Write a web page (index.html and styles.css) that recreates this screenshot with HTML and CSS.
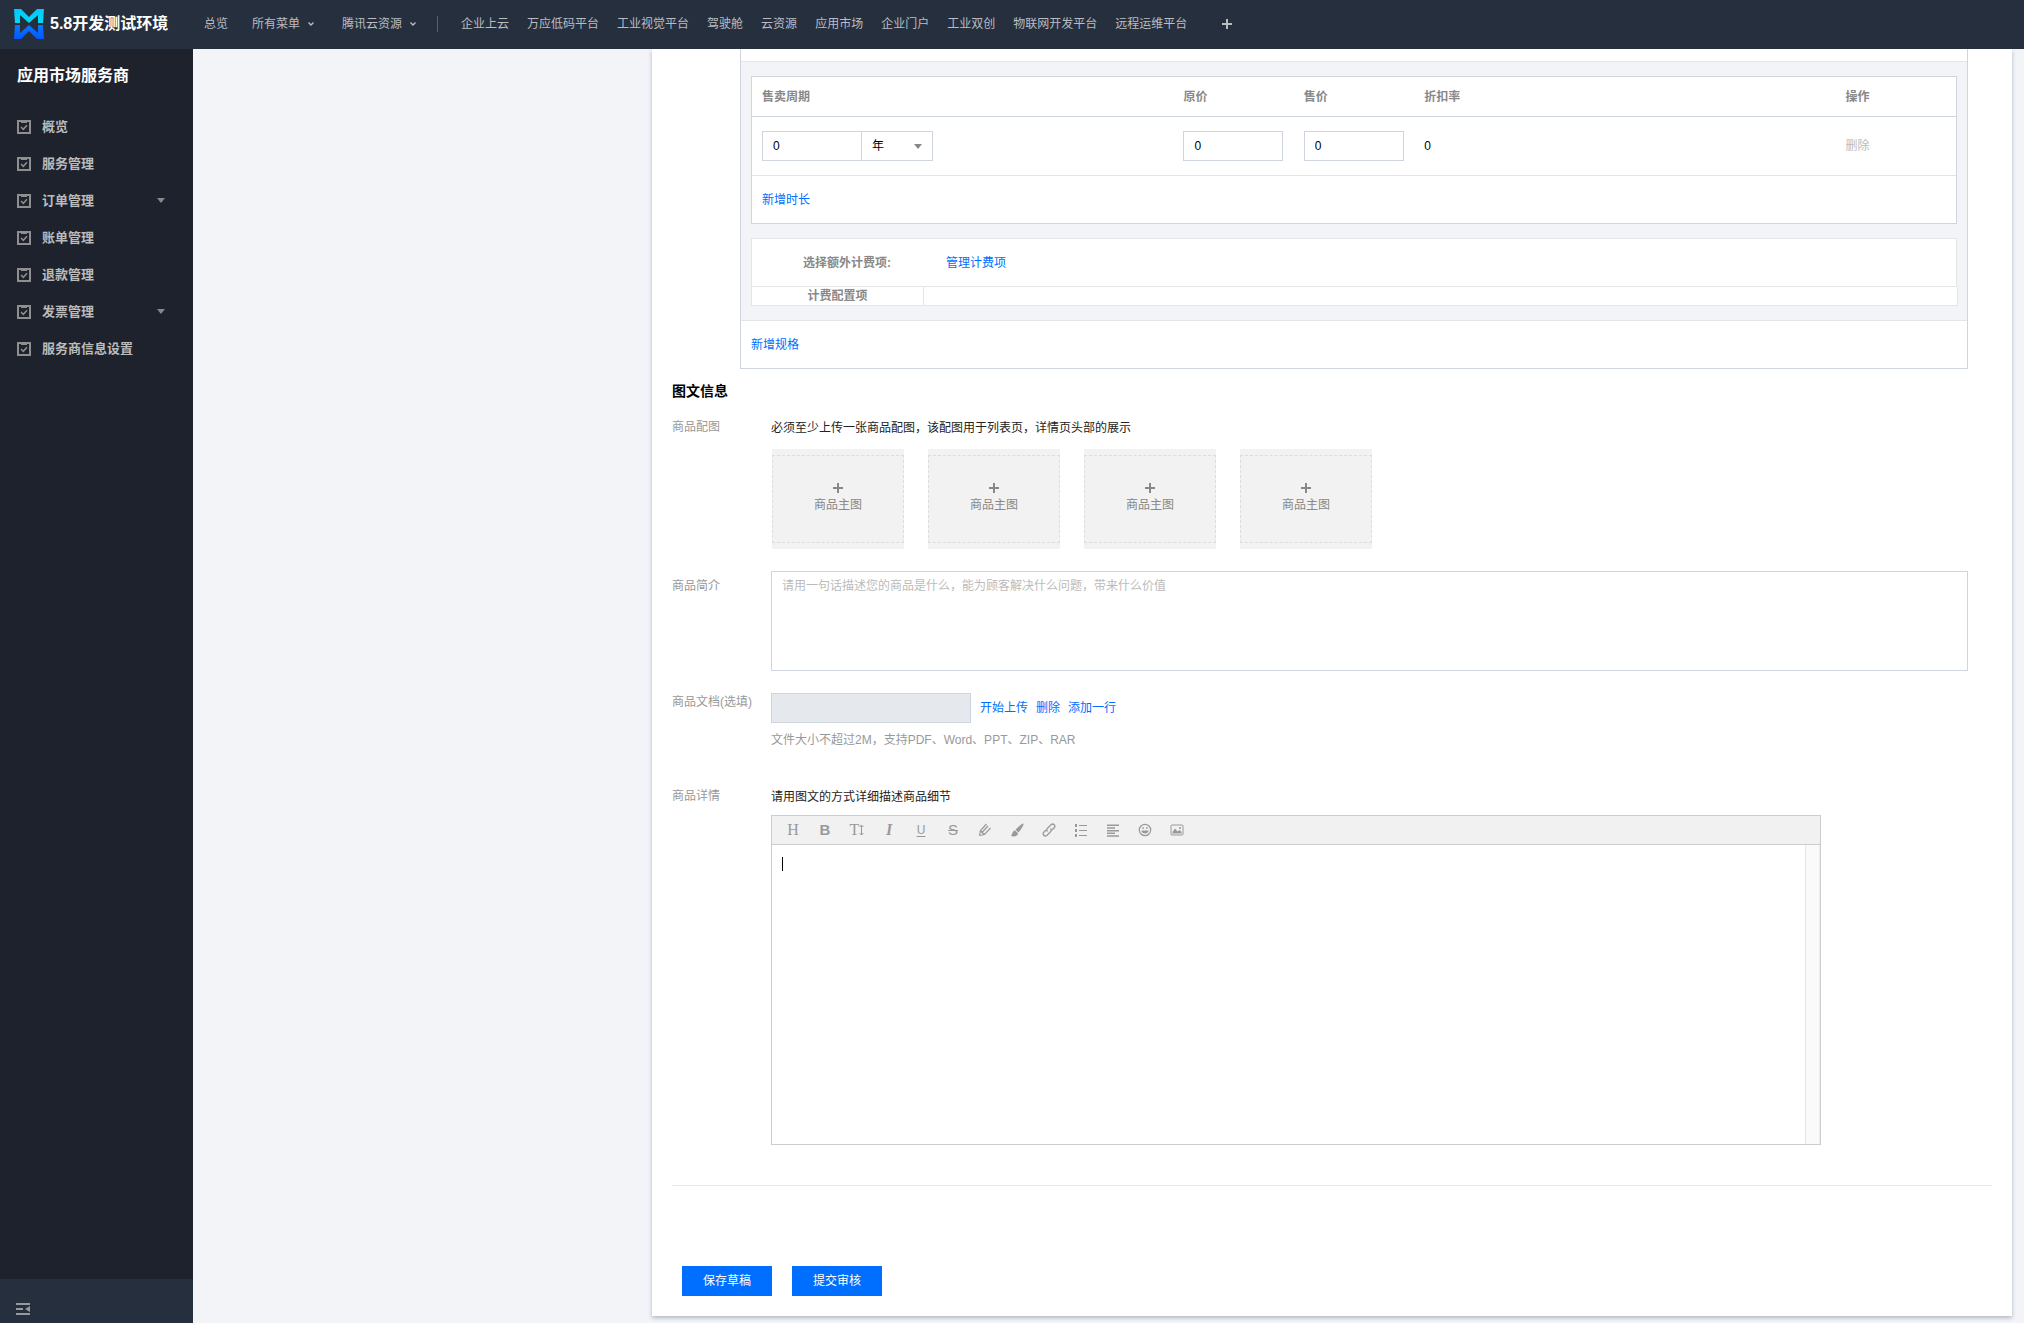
FILE: index.html
```html
<!DOCTYPE html>
<html lang="zh-CN">
<head>
<meta charset="utf-8">
<title>应用市场服务商</title>
<link rel="stylesheet" href="styles.css">
</head>
<body>
<svg class="sprite" aria-hidden="true">
  <symbol id="task" viewBox="0 0 14 14"><path d="M1 1h12v12H1z" fill="none" stroke="currentColor" stroke-width="2"/><path d="M4 1h6v2H4z" fill="currentColor"/><path d="M4 7l2.300 2.300L10 5.200" fill="none" stroke="currentColor" stroke-width="1.500"/></symbol>
  <symbol id="chevron" viewBox="0 0 8 8"><path d="M1.500 2.500L4 5l2.500-2.500" fill="none" stroke="currentColor" stroke-width="1.400"/></symbol>
  <symbol id="plus" viewBox="0 0 10 10"><path d="M5 0v10M0 5h10" stroke="currentColor" stroke-width="2"/></symbol>
</svg>

<header class="topbar">
  <a class="brand" href="#">
    <svg class="logo" viewBox="0 0 30 30" aria-hidden="true">
      <defs>
        <linearGradient id="cyan" x2="0" y2="1"><stop stop-color="#00c8ff"/><stop offset="1" stop-color="#00dcf5"/></linearGradient>
        <linearGradient id="blue" x2="0" y2="1"><stop stop-color="#0a78ff"/><stop offset="1" stop-color="#0058ff"/></linearGradient>
      </defs>
      <path d="M0 0h7l8 8 8-8h7l-1 14h-5V6l-9 8-9-8v8H1z" fill="url(#cyan)"/>
      <path d="M0 30h7l8-8 8 8h7l-1-14h-5v8l-9-8-9 8v-8H1z" fill="url(#blue)"/>
    </svg>
    <span>5.8开发测试环境</span>
  </a>
  <nav class="menus">
    <a href="#">总览</a>
    <a href="#">所有菜单<svg class="chev"><use href="#chevron"/></svg></a>
    <a href="#">腾讯云资源<svg class="chev"><use href="#chevron"/></svg></a>
  </nav>
  <nav class="shortcuts">
    <a href="#">企业上云</a>
    <a href="#">万应低码平台</a>
    <a href="#">工业视觉平台</a>
    <a href="#">驾驶舱</a>
    <a href="#">云资源</a>
    <a href="#">应用市场</a>
    <a href="#">企业门户</a>
    <a href="#">工业双创</a>
    <a href="#">物联网开发平台</a>
    <a href="#">远程运维平台</a>
  </nav>
  <button class="add" type="button" aria-label="添加"><svg><use href="#plus"/></svg></button>
</header>

<div class="layout">
  <aside class="sidebar">
    <h1>应用市场服务商</h1>
    <nav>
      <a href="#"><svg class="task"><use href="#task"/></svg>概览</a>
      <a href="#"><svg class="task"><use href="#task"/></svg>服务管理</a>
      <a href="#"><svg class="task"><use href="#task"/></svg>订单管理<i class="caret"></i></a>
      <a href="#"><svg class="task"><use href="#task"/></svg>账单管理</a>
      <a href="#"><svg class="task"><use href="#task"/></svg>退款管理</a>
      <a href="#"><svg class="task"><use href="#task"/></svg>发票管理<i class="caret"></i></a>
      <a href="#"><svg class="task"><use href="#task"/></svg>服务商信息设置</a>
    </nav>
    <button class="collapse" type="button" aria-label="收起菜单"><svg viewBox="0 0 14 12"><path d="M0 0h14v2H0zM0 5h7v2H0zM0 10h14v2H0zM14 3v6L9 6z" fill="currentColor"/></svg></button>
  </aside>

  <main class="content">
    <form class="panel">
      <section class="spec">
        <div class="spec-body">
          <table class="periods">
            <thead>
              <tr><th class="wide">售卖周期</th><th>原价</th><th>售价</th><th class="wide">折扣率</th><th>操作</th></tr>
            </thead>
            <tbody>
              <tr>
                <td><div class="duration"><input class="field" type="text" value="0" aria-label="售卖周期"><span class="unit"><select class="field" aria-label="周期单位"><option>年</option></select><i class="caret"></i></span></div></td>
                <td><input class="field" type="text" value="0" aria-label="原价"></td>
                <td><input class="field" type="text" value="0" aria-label="售价"></td>
                <td>0</td>
                <td><button class="link" type="button" disabled>删除</button></td>
              </tr>
              <tr><td class="more" colspan="5"><a href="#">新增时长</a></td></tr>
            </tbody>
          </table>
          <div class="charge">
            <strong>选择额外计费项:</strong>
            <a href="#">管理计费项</a>
          </div>
          <table class="config"><tr><th>计费配置项</th><td></td></tr></table>
        </div>
        <div class="spec-more"><a href="#">新增规格</a></div>
      </section>

      <h2>图文信息</h2>
      <div class="row">
        <span class="label">商品配图</span>
        <div>
          <p class="tip">必须至少上传一张商品配图，该配图用于列表页，详情页头部的展示</p>
          <div class="uploads">
            <button class="upload" type="button"><span><svg><use href="#plus"/></svg>商品主图</span></button>
            <button class="upload" type="button"><span><svg><use href="#plus"/></svg>商品主图</span></button>
            <button class="upload" type="button"><span><svg><use href="#plus"/></svg>商品主图</span></button>
            <button class="upload" type="button"><span><svg><use href="#plus"/></svg>商品主图</span></button>
          </div>
        </div>
      </div>
      <div class="row">
        <label class="label inset" for="intro">商品简介</label>
        <textarea id="intro" class="field" placeholder="请用一句话描述您的商品是什么，能为顾客解决什么问题，带来什么价值"></textarea>
      </div>
      <div class="row docs">
        <label class="label" for="doc">商品文档(选填)</label>
        <div>
          <div class="file"><input id="doc" class="field" type="text" disabled><a href="#">开始上传</a><a href="#">删除</a><a href="#">添加一行</a></div>
          <p class="hint">文件大小不超过2M，支持PDF、Word、PPT、ZIP、RAR</p>
        </div>
      </div>
      <div class="row detail">
        <span class="label">商品详情</span>
        <div>
          <p class="tip">请用图文的方式详细描述商品细节</p>
          <div class="editor">
            <div class="tools">
              <button type="button" class="serif">H</button>
              <button type="button" class="bold">B</button>
              <button type="button" class="serif">T<svg class="updown" viewBox="0 0 5 12"><path d="M2.500 1v10M.5 3l2-2 2 2M.5 9l2 2 2-2" fill="none" stroke="currentColor"/></svg></button>
              <button type="button" class="serif italic">I</button>
              <button type="button" class="under">U</button>
              <button type="button" class="strike">S</button>
              <button type="button" aria-label="文字颜色"><svg viewBox="0 0 14 14"><path d="M1.500 12.500l1-5 6-6.500M1.500 12.500l5-1 6-6.500M4 9.500l6-6.500M2.500 7.500l1.500 2 2.500 2" fill="none" stroke="currentColor" stroke-width="1.200"/></svg></button>
              <button type="button" aria-label="背景颜色"><svg viewBox="0 0 14 14"><path d="M13.500.5c.8.700-2.500 6.500-5 9L5.500 6.800C7.500 4.500 12.700-.2 13.500.5zM5 7.500l3 2.700c0 3-4 4-7.200 2.500C2.500 12 2 8 5 7.500z" fill="currentColor"/></svg></button>
              <button type="button" aria-label="链接"><svg viewBox="0 0 14 14"><g fill="none" stroke="currentColor" stroke-width="1.300"><path d="M5.500 8.500C4.300 7.300 4.700 6 5.700 5L9 1.800c2.500-2 5 .8 3.200 3L10 7"/><path d="M8.500 5.500c1.200 1.200.8 2.500-.2 3.500L5 12.200c-2.500 2-5-.8-3.200-3L4 7"/></g></svg></button>
              <button type="button" aria-label="列表"><svg viewBox="0 0 14 14"><path d="M1 1h2v3H1zM1 6h2v3H1zM1 11h2v3H1zM5 2h8v1H5zM5 7h8v1H5zM5 12h8v1H5z" fill="currentColor"/></svg></button>
              <button type="button" aria-label="对齐"><svg viewBox="0 0 14 14"><path d="M1 1.500h12v1.500H1zM1 4.200h8v1.500H1zM1 6.900h12v1.500H1zM1 9.600h8v1.500H1zM1 12.300h12v1.500H1z" fill="currentColor"/></svg></button>
              <button type="button" aria-label="表情"><svg viewBox="0 0 14 14"><circle cx="7" cy="7" r="5.700" fill="none" stroke="currentColor" stroke-width="1.200"/><path d="M4.500 4h1.200v2H4.500zM8.300 4h1.200v2H8.300zM3.300 7.500h7.400c-.5 4-6.900 4-7.400 0z" fill="currentColor"/></svg></button>
              <button type="button" aria-label="图片"><svg viewBox="0 0 14 14"><rect x="1" y="2" width="12" height="10" rx="1" fill="none" stroke="currentColor"/><path d="M2.500 10.500V9L5 5.500l2.500 3L9.500 7l2 2v1.500z" fill="currentColor"/><circle cx="10" cy="5" r="1" fill="currentColor"/></svg></button>
            </div>
            <div class="page"><div class="text" contenteditable="true" role="textbox" aria-label="商品详情"><i class="cursor"></i></div><div class="track"></div></div>
          </div>
        </div>
      </div>
      <hr>
      <div class="actions">
        <button type="button">保存草稿</button>
        <button type="button">提交审核</button>
      </div>
    </form>
  </main>
</div>
</body>
</html>
```

FILE: styles.css
```css
* { box-sizing: border-box; }
body {
  margin: 0;
  min-height: 100vh;
  display: flex;
  flex-direction: column;
  background: #f2f4f8;
  color: #000;
  font: 12px/18px "Liberation Sans", "Noto Sans CJK SC", sans-serif;
}
button, input, select, textarea { font: inherit; color: inherit; }
button { padding: 0; border: 0; background: none; }
a { color: #006eff; text-decoration: none; }
p, h1, h2 { margin: 0; }
svg { display: block; }
.sprite { display: none; }

.topbar {
  display: flex;
  align-items: center;
  height: 49px;
  padding: 0 0 1px 14px;
  background: #262f3e;
  color: #b9bdc2;
}
.topbar a { display: flex; align-items: center; color: inherit; white-space: nowrap; }
.topbar .brand { width: 190px; gap: 6px; color: #fff; font-size: 16px; font-weight: bold; }
.logo { width: 30px; height: 30px; }
.menus { display: flex; gap: 24px; padding-right: 17px; }
.chev { width: 8px; height: 8px; margin: 0 3px 0 7px; }
.shortcuts { display: flex; gap: 18px; position: relative; padding-left: 24px; }
.shortcuts::before { content: ""; position: absolute; left: 0; top: 1px; height: 16px; border-left: 1px solid #566070; }
.add { margin-left: 35px; }
.add svg { width: 10px; height: 10px; }

.layout { flex: 1; display: flex; }
.sidebar {
  flex: none;
  width: 193px;
  display: flex;
  flex-direction: column;
  background: #1e222d;
  color: #bbb;
}
.sidebar h1 { padding: 17px 17px 22px; color: #fff; font-size: 16px; line-height: 20px; }
.sidebar nav a {
  display: flex;
  align-items: center;
  height: 37px;
  padding: 0 28px 0 17px;
  color: inherit;
  font-size: 13px;
  font-weight: bold;
}
.task { width: 14px; height: 14px; margin-right: 11px; color: #8f8f8f; }
.caret { border: 4px solid transparent; border-top: 5px solid #888; border-bottom: 0; }
.sidebar .caret { margin-left: auto; }
.collapse { display: flex; align-items: center; height: 44px; margin-top: auto; padding: 16px 16px 0; background: #262f3e; color: #999; }
.collapse svg { width: 14px; height: 12px; }

.content { flex: 1; min-width: 0; padding: 0 12px 7px 459px; overflow: hidden; }
.panel { padding: 0 20px 20px; background: #fff; box-shadow: 0 2px 4px rgba(54, 58, 80, .32); }

.field { height: 30px; padding: 0 10px; border: 1px solid #cfd5de; border-radius: 0; background: #fff; outline: 0; }
.spec { margin: 0 24px 12px 68px; padding-top: 12px; border: 1px solid #cfd5de; border-top: 0; }
.spec-body { padding: 14px 10px; border: 1px solid #e5e5e5; border-width: 1px 0; background: #f2f4f8; }
table { border-collapse: separate; border-spacing: 0; width: 100%; }
.periods { table-layout: fixed; border: 1px solid #cfd5de; background: #fff; }
.periods th { width: 10%; height: 40px; padding: 0 10px; border-bottom: 1px solid #cfd5de; color: #888; text-align: left; }
.periods .wide { width: 35%; }
.periods td { height: 59px; padding: 0 10px; border-bottom: 1px solid #e5e5e5; }
.periods td .field { display: block; width: 100px; }
.periods .more { height: 47px; border-bottom: 0; }
.duration { display: flex; }
.unit { display: flex; align-items: center; position: relative; margin-left: -1px; }
.periods .unit .field { width: 72px; appearance: none; }
.unit .caret { position: absolute; right: 11px; pointer-events: none; }
.link { color: #006eff; }
.link:disabled { color: #bbb; }
.charge { display: flex; align-items: center; height: 49px; margin-top: 14px; border: 1px solid #e5e5e5; background: #fff; }
.charge strong { width: 194px; padding-left: 51px; color: #888; }
.config { width: calc(100% + 1px); border: 1px solid #e5e5e5; border-top: 0; background: #fff; }
.config th { width: 172px; padding: 0; border-right: 1px solid #e5e5e5; color: #888; }
.config td { padding: 0; }
.spec-more { display: flex; align-items: center; height: 47px; padding-left: 10px; }

h2 { margin-bottom: 17px; font-size: 14px; line-height: 20px; }
.row { display: grid; grid-template-columns: 99px minmax(0, 1fr); margin: 0 24px 22px 0; }
.label { color: #999; }
.inset { padding-top: 6px; }
.tip { color: #222; line-height: 20px; }
.uploads { display: flex; gap: 24px; margin: 11px 1px 0; }
.upload { width: 132px; height: 100px; padding: 6px 0; background: #f2f2f2; color: #888; }
.upload span { display: flex; flex-direction: column; align-items: center; justify-content: center; gap: 3px; height: 100%; padding-bottom: 2px; border: 1px dashed #ddd; }
.upload svg { width: 10px; height: 10px; }
textarea.field { display: block; width: 100%; height: 100px; padding: 5px 10px; resize: none; }
textarea::placeholder { color: #bbb; }
.row.docs { margin-bottom: 38px; }
.file { display: flex; align-items: center; gap: 8px; }
.file .field { width: 200px; margin-right: 1px; background: #e5e8ed; }
.hint { margin-top: 8px; color: #999; }
.row.detail { margin-bottom: 40px; }
.editor { max-width: 1050px; margin-top: 8px; border: 1px solid #ccc; }
.tools { display: flex; height: 29px; padding: 0 0 1px 5px; border-bottom: 1px solid #ccc; background: #f1f1f1; color: #999; }
.tools button { display: flex; align-items: center; justify-content: center; width: 32px; font-size: 15px; line-height: 26px; }
.tools svg { width: 14px; height: 14px; }
.tools .updown { width: 5px; height: 12px; }
.tools .serif { font-family: "Liberation Serif", serif; font-size: 16px; }
.tools .bold { font-weight: bold; }
.tools .italic { font-style: italic; font-weight: bold; }
.tools .under { font-size: 12px; text-decoration: underline; text-underline-offset: 2px; }
.tools .strike { text-decoration: line-through; }
.page { display: flex; height: 299px; }
.text { flex: 1; padding: 12px 10px; outline: 0; }
.cursor { display: block; width: 1px; height: 14px; background: #000; }
.track { width: 15px; border-left: 1px solid #e5e5e5; border-right: 1px solid #eee; background: #fafafa; }
hr { margin: 0 0 80px; border: 0; border-top: 1px solid #e8e8e8; }
.actions { display: flex; gap: 20px; padding-left: 10px; }
.actions button { width: 90px; height: 30px; background: #006eff; color: #fff; }
```
